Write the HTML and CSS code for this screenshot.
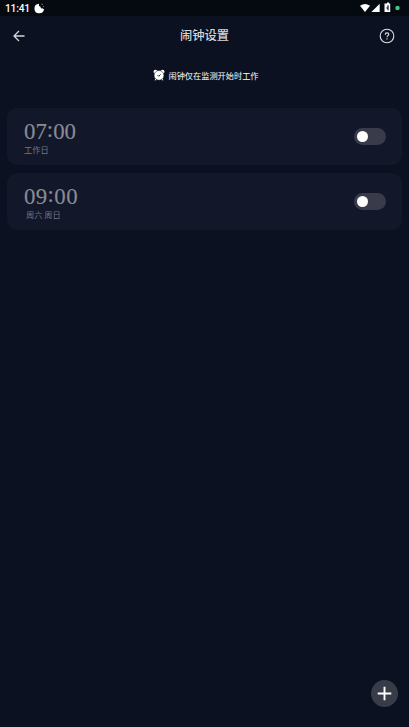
FILE: index.html
```html
<!DOCTYPE html>
<html lang="zh-CN">
<head>
<meta charset="utf-8">
<title>闹钟设置</title>
<link rel="stylesheet" href="styles.css">
</head>
<body>
<div class="status">
  <span class="clock">11:41</span>
  <svg class="cookie" width="11" height="11" viewBox="0 0 11 11"><path d="M5 .7A4.8 4.8 0 1 0 10 6.2L8.2 5.2 7 5.4 6.5 3.8 5 3z" fill="#fff"/><path d="M7.5.8h1.2v1.2H7.5zM9 3h1v1H9z" fill="#777"/></svg>
  <svg class="signals" width="41" height="12" viewBox="0 0 41 12">
    <path d="M0 3.8Q5 .2 10 3.8L5 10z" fill="#fff"/>
    <path d="M19.7 1.7V10h-8.3z" fill="#fff"/>
    <path d="M26 1.5h1V.6h2v.9h1.2V10H24.5V1.5z" fill="#fff"/>
    <path d="M28 3.2v5M26.3 6h1.7" stroke="#141820" stroke-width="1.2"/>
    <circle cx="37.5" cy="6" r="2.2" fill="#43c785"/>
  </svg>
</div>
<header class="bar">
  <svg width="12" height="12" viewBox="0 0 12 12" fill="none" stroke="#d5d6dc" stroke-width="1.3"><path d="M11.5 6H1.2M6 1 1 6l5 5"/></svg>
  <h1>闹钟设置</h1>
  <svg width="16" height="16" viewBox="0 0 16 16" fill="none" stroke="#dfe0e5" stroke-width="1.1"><circle cx="8" cy="8" r="6.8"/><path d="M6.2 6.7Q6.2 4.9 8 4.9T9.8 6.5C9.8 7.7 8 7.7 8 9.2M8 10.3v1.2"/></svg>
</header>
<p class="hint">
  <svg width="12" height="12" viewBox="0 0 12 12"><g fill="#fff"><circle cx="2.5" cy="2.7" r="2"/><circle cx="9.5" cy="2.7" r="2"/><circle cx="6" cy="6.4" r="4.9" stroke="#0b1120" stroke-width=".5"/><path d="m2.8 9.5-1.3 1.8h1.8zM9.2 9.5l1.3 1.8H8.7z"/></g><path d="m4.6 6.2 1.1 1.1 1.9-1.9" fill="none" stroke="#0b1120" stroke-width=".9"/></svg>
  <span>闹钟仅在监测开始时工作</span>
</p>
<main class="list">
  <section class="card">
    <div><div class="time">07<span class="colon">:</span>00</div><div class="days">工作日</div></div>
    <div class="toggle"><i></i></div>
  </section>
  <section class="card">
    <div><div class="time late">09<span class="colon">:</span>00</div><div class="days weekend">周六 周日</div></div>
    <div class="toggle"><i></i></div>
  </section>
</main>
<div class="footer">
  <div class="fab"><svg width="15" height="15" viewBox="0 0 15 15"><path d="M7.5.7v13.6M.7 7.5h13.6" stroke="#fff" stroke-width="1.9"/></svg></div>
</div>
</body>
</html>
```
FILE: styles.css
```css
* { box-sizing: border-box; }
body {
  margin: 0;
  height: 727px;
  display: flex;
  flex-direction: column;
  background: #0b1120;
  color: #fff;
  font-family: "Noto Sans CJK SC", sans-serif;
}
.status {
  height: 16px;
  display: flex;
  align-items: center;
  padding: 0 8px 0 5px;
  background: #050910;
}
.clock {
  width: 29px;
  padding-top: 1px;
  font: 500 10.2px/15px Roboto, sans-serif;
  letter-spacing: -.2px;
  white-space: nowrap;
}
.signals { margin-left: auto; }
.bar {
  height: 39px;
  display: flex;
  align-items: center;
  justify-content: space-between;
  padding: 0 14px 0 13px;
}
.bar h1 {
  margin: 0;
  padding: 0 0 1px 5px;
  font-size: 12.3px;
  font-weight: 500;
  line-height: 18px;
  color: #d5d6dc;
}
.hint {
  margin: 13px 0 1px;
  height: 14px;
  display: flex;
  align-items: center;
  justify-content: center;
  gap: 3px;
  padding-left: 3px;
  font-size: 8.2px;
  line-height: 14px;
}
.list { margin-top: 25px; padding: 0 7px; display: flex; flex-direction: column; gap: 8px; }
.card {
  height: 57px;
  border-radius: 10px;
  background: #12172a;
  display: flex;
  align-items: center;
  justify-content: space-between;
  padding: 0 16px 0 17px;
}
.time {
  height: 24px;
  font: 22.8px/24px "Liberation Serif", serif;
  color: #898b95;
  -webkit-text-stroke: .15px #898b95;
}
.late { letter-spacing: .4px; }
.colon { display: inline-block; line-height: 20px; transform: translateY(-2px); }
.days { font-size: 8.2px; line-height: 10px; color: #747681; }
.weekend { padding-left: 2px; }
.toggle { width: 32px; height: 17px; border-radius: 9px; background: #393b4b; padding: 3px; }
.toggle i { display: block; width: 11px; height: 11px; border-radius: 50%; background: #fff; }
.footer { margin-top: auto; padding: 0 11px 20px 0; display: flex; justify-content: flex-end; }
.fab {
  width: 27px;
  height: 27px;
  border-radius: 50%;
  background: #383c49;
  display: flex;
  align-items: center;
  justify-content: center;
}
```
